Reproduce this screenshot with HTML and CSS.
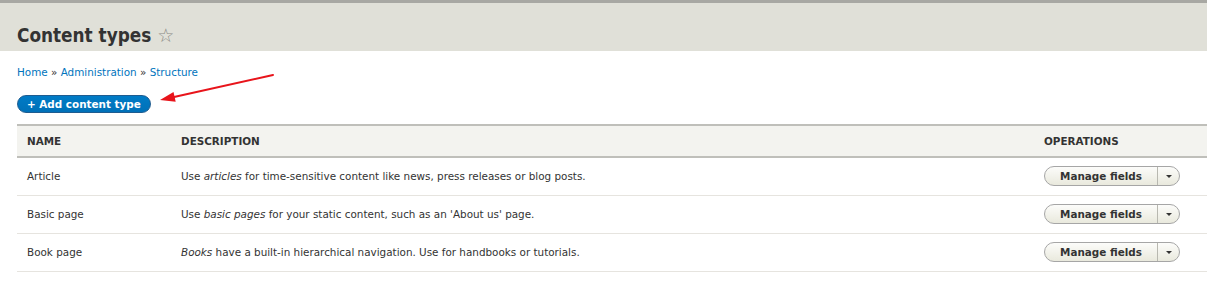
FILE: index.html
```html
<!DOCTYPE html>
<html lang="en">

<head>
    <meta charset="UTF-8">
    <title>Content types</title>
    <link rel="stylesheet" href="styles.css">
</head>

<body>
    <div class="page-header">
        <h1 class="page-title">Content types <span class="shortcut-star">&#9734;</span></h1>
    </div>

    <div class="page-content">
        <div class="breadcrumb">
            <a href="#">Home</a> &raquo; <a href="#">Administration</a> &raquo; <a href="#">Structure</a>
        </div>

        <div class="action-links">
            <a href="#" class="button-action">+ Add content type</a>
            <!-- annotation arrow -->
            <svg class="annotation-arrow" width="130" height="40" viewBox="0 0 130 40">
                <line x1="116" y1="5" x2="17" y2="27" stroke="#e8141b" stroke-width="2" stroke-linecap="round" />
                <polygon points="3,30 18.7,31.7 16.5,21.9" fill="#e8141b" />
            </svg>
        </div>

        <table class="types-table">
            <thead>
                <tr>
                    <th class="col-name">Name</th>
                    <th>Description</th>
                    <th class="col-ops">Operations</th>
                </tr>
            </thead>
            <tbody>
                <tr>
                    <td>Article</td>
                    <td>Use <em>articles</em> for time-sensitive content like news, press releases or blog posts.</td>
                    <td>
                        <div class="dropbutton"><span class="dropbutton-main">Manage fields</span><span class="dropbutton-toggle"><span class="caret"></span></span></div>
                    </td>
                </tr>
                <tr>
                    <td>Basic page</td>
                    <td>Use <em>basic pages</em> for your static content, such as an 'About us' page.</td>
                    <td>
                        <div class="dropbutton"><span class="dropbutton-main">Manage fields</span><span class="dropbutton-toggle"><span class="caret"></span></span></div>
                    </td>
                </tr>
                <tr>
                    <td>Book page</td>
                    <td><em>Books</em> have a built-in hierarchical navigation. Use for handbooks or tutorials.</td>
                    <td>
                        <div class="dropbutton"><span class="dropbutton-main">Manage fields</span><span class="dropbutton-toggle"><span class="caret"></span></span></div>
                    </td>
                </tr>
            </tbody>
        </table>
    </div>
</body>

</html>
```

FILE: styles.css
```css
body {
    font-family: 'DejaVu Sans', sans-serif;
    font-size: 10.4px;
    color: #333;
    background-color: #fff;
    margin: 0;
    overflow: hidden;
}

a {
    color: #0074bd;
    text-decoration: none;
}

.page-header {
    background-color: #e0e0d8;
    border-top: 3px solid #a8a8a3;
    height: 48px;
    padding: 0 17px;
}

.page-title {
    margin: 0;
    padding-top: 20px;
    font-family: 'DejaVu Sans Condensed', 'DejaVu Sans', sans-serif;
    font-size: 18.8px;
    line-height: 24px;
    font-weight: bold;
    color: #333;
}

.shortcut-star {
    font-family: 'DejaVu Sans', sans-serif;
    font-weight: normal;
    color: #8a8a85;
    font-size: 19px;
}

.page-content {
    padding-left: 17px;
}

.breadcrumb {
    margin-top: 14px;
    line-height: 14px;
}

.action-links {
    position: relative;
    margin-top: 16px;
    height: 18px;
}

.button-action {
    display: inline-block;
    height: 18px;
    line-height: 17px;
    box-sizing: border-box;
    padding: 0 9px;
    border: 1px solid #1e5c90;
    border-radius: 10px;
    background: linear-gradient(#007bc6, #0071b8);
    color: #fff;
    font-weight: bold;
}

.annotation-arrow {
    position: absolute;
    left: 140px;
    top: -25px;
}

.types-table {
    margin-top: 11px;
    width: 1210px;
    border-collapse: collapse;
}

.types-table th {
    text-align: left;
    text-transform: uppercase;
    font-weight: bold;
    background-color: #f3f3ef;
    border-top: 2px solid #bfbfba;
    border-bottom: 2px solid #bfbfba;
    height: 30px;
    padding: 0 10px;
}

.types-table .col-name {
    width: 134px;
}

.types-table .col-ops {
    width: 173px;
}

.types-table td {
    height: 36px;
    padding: 0 10px 1px;
    border-bottom: 1px solid #e6e4df;
}

.dropbutton {
    display: inline-flex;
    height: 20px;
    box-sizing: border-box;
    border: 1px solid #a6a6a6;
    border-radius: 10px;
    background: linear-gradient(#fcfcfa, #e9e9dd);
    font-weight: bold;
    color: #333;
}

.dropbutton-main {
    width: 112px;
    text-align: center;
    line-height: 18px;
    border-right: 1px solid #b8b8b0;
}

.dropbutton-toggle {
    width: 21px;
    display: flex;
    align-items: center;
    justify-content: center;
}

.caret {
    width: 0;
    height: 0;
    border-left: 3px solid transparent;
    border-right: 3px solid transparent;
    border-top: 3px solid #333;
}
```
